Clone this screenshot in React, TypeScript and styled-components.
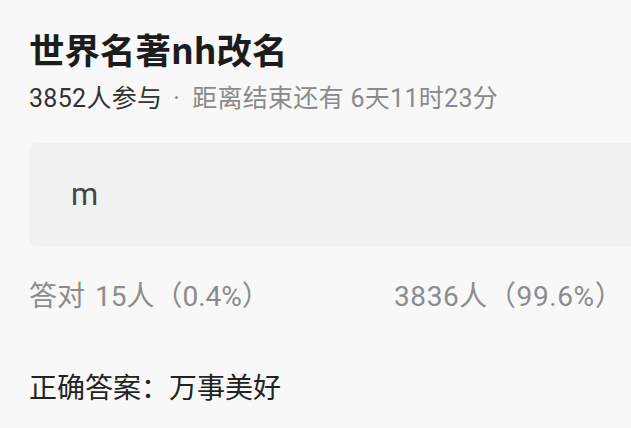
import React from 'react';
import styled, { createGlobalStyle } from 'styled-components';

const GlobalStyle = createGlobalStyle`
  html, body {
    margin: 0;
    padding: 0;
    background: #f8f8f8;
  }
  body {
    font-family: Roboto, "Noto Sans CJK SC", sans-serif;
  }
`;

const Page = styled.div`
  width: 631px;
  height: 428px;
  overflow: hidden;
  padding: 24px 0 0 29px;
  box-sizing: border-box;
`;

const Title = styled.h1`
  margin: 0;
  font-family: "Noto Sans CJK SC", sans-serif;
  font-size: 35.5px;
  line-height: 50px;
  font-weight: 700;
  color: #1c1c1c;
`;

const Meta = styled.div`
  margin-top: 8px;
  font-size: 25px;
  line-height: 34px;
  letter-spacing: 0.3px;
  color: #8a8a8a;
  span {
    color: #333;
  }
`;

const Dot = styled.i`
  font-style: normal;
  margin: 0 12px 0 11px;
`;

const AnswerBox = styled.div`
  margin-top: 27px;
  margin-right: -20px;
  height: 103px;
  background: #f1f1f1;
  border-radius: 8px 0 0 8px;
  display: flex;
  align-items: center;
  padding-left: 42px;
  font-size: 31px;
  color: #444;
`;

const Stats = styled.div`
  margin-top: 33px;
  display: grid;
  grid-template-columns: 365px auto;
  font-size: 28px;
  line-height: 36px;
  color: #8c8c8c;
`;

const Count = styled.span`
  margin-left: 10px;
`;

const Share = styled.div`
  letter-spacing: 0.6px;
`;

const Correct = styled.div`
  margin-top: 56px;
  font-size: 28px;
  line-height: 36px;
  color: #222;
`;

export default function App() {
  return (
    <>
      <GlobalStyle />
      <Page>
        <Title>世界名著nh改名</Title>
        <Meta>
          <span>3852人参与</span>
          <Dot>·</Dot>距离结束还有 6天11时23分
        </Meta>
        <AnswerBox>m</AnswerBox>
        <Stats>
          <div>
            答对<Count>15人（0.4%）</Count>
          </div>
          <Share>3836人（99.6%）</Share>
        </Stats>
        <Correct>正确答案：万事美好</Correct>
      </Page>
    </>
  );
}
